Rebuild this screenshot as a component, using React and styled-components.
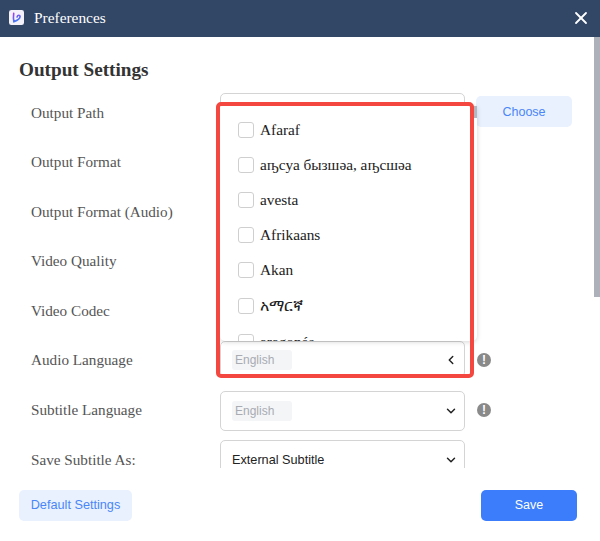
import { ChevronDown, ChevronLeft, X } from "lucide-react";
import styled, { createGlobalStyle } from "styled-components";

const GlobalStyle = createGlobalStyle`
  html, body {
    margin: 0;
    padding: 0;
    background: #fff;
  }
`;

const Window = styled.div`
  position: relative;
  width: 600px;
  height: 541px;
  display: flex;
  flex-direction: column;
  overflow: hidden;
  background: #fff;
  font-family: "Liberation Serif", serif;
`;

const TitleBar = styled.header`
  height: 37px;
  flex: none;
  display: flex;
  align-items: center;
  padding: 0 9px 2px 9px;
  box-sizing: border-box;
  background: #324666;
  color: #fff;
`;

const AppLogo = styled.svg`
  width: 15px;
  height: 15px;
  margin-right: 10px;
`;

const WindowTitle = styled.span`
  flex: 1;
  font-size: 15.4px;
`;

const Content = styled.main`
  flex: 1;
  height: 431px;
  overflow: hidden;
  padding: 22px 0 0 19px;
  box-sizing: border-box;
`;

const Heading = styled.h1`
  margin: 0 0 13px;
  font-size: 19.2px;
  line-height: 21px;
  font-weight: 700;
  color: #333;
`;

const Rows = styled.div`
  display: flex;
  flex-direction: column;
  gap: 9.6px;
  padding-left: 12px;
`;

const Row = styled.div`
  height: 40px;
  display: flex;
  align-items: center;
`;

const Label = styled.label`
  width: 189px;
  padding-bottom: 1px;
  font-size: 15.2px;
  color: #555;
`;

const Field = styled.div`
  width: 245px;
  height: ${({ $open }) => ($open ? "36px" : "40px")};
  align-self: flex-start;
  box-sizing: border-box;
  display: flex;
  align-items: center;
  justify-content: space-between;
  padding: ${({ $open }) => ($open ? "2px" : "0")} 6px 0 11px;
  border: 1px solid #d4d4d4;
  border-radius: 5px;
  background: #fff;
  font-family: "Liberation Sans", sans-serif;
  font-size: 12.7px;
  color: #222;
`;

const Tag = styled.span`
  width: 60px;
  height: 20px;
  padding-left: 3px;
  box-sizing: border-box;
  display: flex;
  align-items: center;
  border-radius: 3px;
  background: #f4f5f7;
  font-size: 12px;
  color: #a8abb2;
`;

const ChooseButton = styled.button`
  width: 96px;
  height: 31px;
  margin: 3px 0 0 11px;
  align-self: flex-start;
  border: 0;
  border-radius: 5px;
  background: #e9f1ff;
  color: #4a86f7;
  font-family: "Liberation Sans", sans-serif;
  font-size: 12.5px;
`;

const InfoDot = styled.span`
  width: 14px;
  height: 14px;
  margin: 0 0 1px 12px;
  display: flex;
  align-items: center;
  justify-content: center;
  border-radius: 50%;
  background: #8a8a8a;
  color: #fff;
  font-family: "Liberation Sans", sans-serif;
  font-size: 12px;
  font-weight: 700;
`;

const Footer = styled.footer`
  height: 73px;
  flex: none;
  display: flex;
  align-items: center;
  justify-content: space-between;
  padding: 1px 23px 0 19px;
  box-sizing: border-box;
  background: #fff;
`;

const DefaultButton = styled.button`
  width: 113px;
  height: 31px;
  border: 0;
  border-radius: 5px;
  background: #e9f1ff;
  color: #4a86f7;
  font-family: "Liberation Sans", sans-serif;
  font-size: 12.7px;
`;

const SaveButton = styled.button`
  width: 96px;
  height: 31px;
  border: 0;
  border-radius: 5px;
  background: #3b7dfb;
  color: #fff;
  font-family: "Liberation Sans", sans-serif;
  font-size: 12.5px;
`;

const PageScroll = styled.div`
  position: absolute;
  top: 37px;
  right: 0;
  width: 6px;
  height: 260px;
  background: #adb1ba;
`;

const LanguageMenu = styled.div`
  position: absolute;
  top: 106px;
  left: 220px;
  width: 257px;
  height: 235px;
  overflow: hidden;
  border-radius: 0 0 5px 5px;
  background: #fff;
  box-shadow: 0 1px 5px rgba(0, 0, 0, 0.16);
`;

const MenuThumb = styled.div`
  position: absolute;
  top: 0;
  right: 0;
  width: 4px;
  height: 12px;
  background: #b4b7be;
`;

const MenuList = styled.ul`
  margin: 0;
  padding: 7px 0 0 18px;
  list-style: none;
`;

const MenuItem = styled.li`
  height: ${({ $tall }) => ($tall ? "38px" : "34.8px")};
  display: flex;
  align-items: center;
  gap: 6px;
  font-size: ${({ $tall }) => ($tall ? "16px" : "15.3px")};
  color: #222;
`;

const Checkbox = styled.span`
  width: 16px;
  height: 16px;
  flex: none;
  box-sizing: border-box;
  border: 1.5px solid #cfcfcf;
  border-radius: 3px;
  background: #fff;
`;

const Highlight = styled.div`
  position: absolute;
  top: 102px;
  left: 216px;
  width: 258px;
  height: 276px;
  box-sizing: border-box;
  border: 4px solid #f4473f;
  border-radius: 5px;
  pointer-events: none;
`;

const rows = [
  { label: "Output Path" },
  { label: "Output Format" },
  { label: "Output Format (Audio)" },
  { label: "Video Quality" },
  { label: "Video Codec" },
  { label: "Audio Language", tag: "English", open: true, info: true },
  { label: "Subtitle Language", tag: "English", info: true },
  { label: "Save Subtitle As:", value: "External Subtitle" },
];

const languages = ["Afaraf", "аҧсуа бызшәа, аҧсшәа", "avesta", "Afrikaans", "Akan", "አማርኛ", "aragonés"];

const App = () => {
  return (
    <Window>
      <GlobalStyle />
      <TitleBar>
        <AppLogo viewBox="0 0 16 16">
          <defs>
            <linearGradient id="logoStroke" x1="0" y1="0" x2="0.4" y2="1">
              <stop offset="0" stopColor="#a13df0" />
              <stop offset="1" stopColor="#3d7bf5" />
            </linearGradient>
          </defs>
          <rect width="16" height="16" rx="2.5" fill="#f4f1fb" />
          <path
            d="M5 3.5 C4.6 6.5 4.6 9.5 5.2 12.5 C8 11.5 11.8 9.5 11.8 7 C11.8 5.2 9.3 5 8.6 7.4"
            fill="none"
            stroke="url(#logoStroke)"
            strokeWidth="1.7"
            strokeLinecap="round"
          />
        </AppLogo>
        <WindowTitle>Preferences</WindowTitle>
        <X size={20} strokeWidth={2.2} />
      </TitleBar>
      <Content>
        <Heading>Output Settings</Heading>
        <Rows>
          {rows.map((row, i) => (
            <Row key={row.label}>
              <Label>{row.label}</Label>
              <Field $open={row.open}>
                {row.tag ? <Tag>{row.tag}</Tag> : <span>{row.value}</span>}
                {i > 0 && (row.open ? <ChevronLeft size={14} strokeWidth={2.5} color="#222" /> : <ChevronDown size={14} strokeWidth={2.5} color="#222" />)}
              </Field>
              {i === 0 && <ChooseButton>Choose</ChooseButton>}
              {row.info && <InfoDot>!</InfoDot>}
            </Row>
          ))}
        </Rows>
      </Content>
      <Footer>
        <DefaultButton>Default Settings</DefaultButton>
        <SaveButton>Save</SaveButton>
      </Footer>
      <PageScroll />
      <LanguageMenu>
        <MenuThumb />
        <MenuList>
          {languages.map((lang) => (
            <MenuItem key={lang} $tall={lang === "አማርኛ"}>
              <Checkbox />
              {lang}
            </MenuItem>
          ))}
        </MenuList>
      </LanguageMenu>
      <Highlight />
    </Window>
  );
};

export default App;
